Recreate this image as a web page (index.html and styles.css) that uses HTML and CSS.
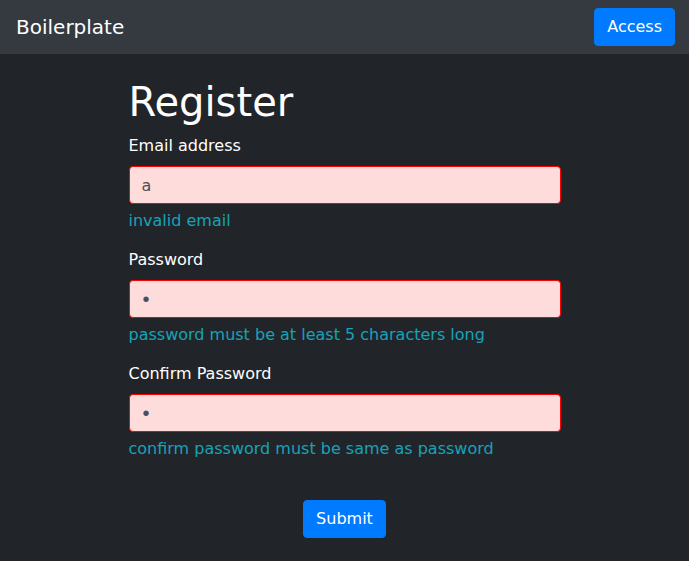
FILE: index.html
```html
<!DOCTYPE html>
<html lang="en">
<head>
<meta charset="utf-8">
<title>Register</title>
<link rel="stylesheet" href="styles.css">
</head>
<body>
<nav class="navbar">
  <span class="brand">Boilerplate</span>
  <button class="btn">Access</button>
</nav>
<main class="page">
  <form class="form">
    <h1 class="title">Register</h1>
    <div class="group">
      <label class="label">Email address</label>
      <input class="input" type="text" value="a">
      <div class="feedback">invalid email</div>
    </div>
    <div class="group">
      <label class="label">Password</label>
      <input class="input input-secret" type="password" value="a">
      <div class="feedback">password must be at least 5 characters long</div>
    </div>
    <div class="group">
      <label class="label">Confirm Password</label>
      <input class="input input-secret" type="password" value="a">
      <div class="feedback">confirm password must be same as password</div>
    </div>
    <div class="actions">
      <button class="btn" type="button">Submit</button>
    </div>
  </form>
</main>
</body>
</html>
```
FILE: styles.css
```css
* { box-sizing: border-box; }
html, body { height: 100%; }
body {
  margin: 0;
  background: #212529;
  color: #fff;
  font-family: "DejaVu Sans", Verdana, sans-serif;
  font-size: 16px;
  line-height: 1.5;
}
.navbar {
  height: 54px;
  background: #343a40;
  display: flex;
  align-items: center;
  justify-content: space-between;
  padding: 0 14px 0 16px;
}
.brand {
  font-size: 20px;
  line-height: 30px;
  color: #fff;
}
.btn {
  font-family: inherit;
  font-size: 16px;
  line-height: 24px;
  color: #fff;
  background: #007bff;
  border: 1px solid #007bff;
  border-radius: 4px;
  padding: 6px 12px;
  height: 38px;
}
.page {
  padding-top: 24px;
}
.form {
  width: 432px;
  margin: 0 auto;
}
.title {
  margin: 0 0 7px;
  font-size: 40px;
  font-weight: 400;
  line-height: 1.2;
}
.group {
  margin-bottom: 14px;
}
.label {
  display: block;
  padding-top: 1px;
  margin-bottom: 8px;
}
.input {
  display: block;
  width: 100%;
  height: 38px;
  padding: 6px 12px;
  font-family: inherit;
  font-size: 16px;
  line-height: 24px;
  color: #495057;
  background: #ffdcdc;
  border: 1px solid #ff0000;
  border-radius: 4px;
  outline: none;
}
.input-secret {
  font-family: "Liberation Sans", Arial, sans-serif;
  font-size: 20px;
  padding-left: 13px;
}
.feedback {
  margin-top: 4px;
  padding-top: 1px;
  color: #17a2b8;
}
.actions {
  display: flex;
  justify-content: center;
  padding-top: 25px;
}
```
